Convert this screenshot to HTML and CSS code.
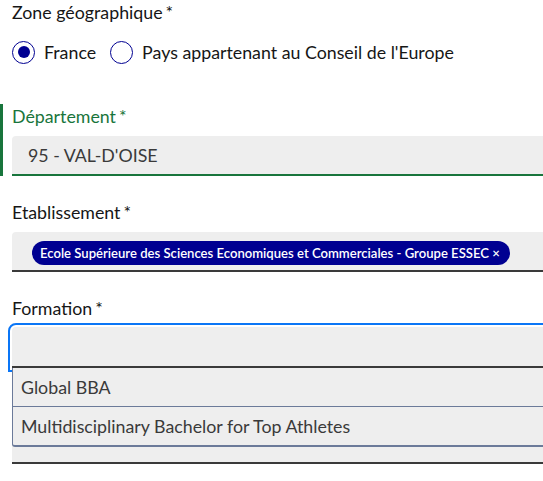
FILE: index.html
```html
<!DOCTYPE html>
<html lang="fr">
<head>
<meta charset="utf-8">
<link rel="stylesheet" href="styles.css">
</head>
<body>
<div class="page">
 <div class="form">
  <fieldset class="zone">
    <legend class="label">Zone géographique<span class="req">*</span></legend>
    <div class="radios">
      <label class="radio"><span class="dot checked"></span>France</label>
      <label class="radio"><span class="dot"></span>Pays appartenant au Conseil de l'Europe</label>
    </div>
  </fieldset>

  <div class="field valid">
    <div class="label green">Département<span class="req">*</span></div>
    <div class="input valid-input">95 - VAL-D'OISE</div>
  </div>

  <div class="field">
    <div class="label">Etablissement<span class="req">*</span></div>
    <div class="input chips">
      <span class="chip">Ecole Supérieure des Sciences Economiques et Commerciales - Groupe ESSEC ×</span>
    </div>
  </div>

  <div class="field">
    <div class="label">Formation<span class="req">*</span></div>
    <div class="combo">
      <div class="combo-input"></div>
      <ul class="options">
        <li>Global BBA</li>
        <li>Multidisciplinary Bachelor for Top Athletes</li>
      </ul>
    </div>
  </div>
 </div>
</div>
</body>
</html>
```

FILE: styles.css
```css
* { box-sizing: border-box; }
html, body { margin: 0; padding: 0; background: #fff; }
body {
  font-family: Lato, "Noto Sans", sans-serif;
  font-size: 17.8px;
  color: #161616;
}
.page { width: 100%; overflow: hidden; height: 481px; }
.form { padding-left: 12px; margin-right: -30px; }
.zone { border: 0; margin: 0; padding: 0; }
.label {
  display: block;
  padding: 0;
  line-height: 24px;
  height: 24px;
}
.req { margin-left: 3px; }
.green { color: #18753c; }
.radios {
  display: flex;
  gap: 14px;
  margin-top: 16px;
  height: 24px;
  align-items: center;
}
.radio { display: flex; align-items: center; gap: 9px; line-height: 24px; }
.dot {
  width: 23px; height: 23px;
  border: 1.5px solid #000091;
  border-radius: 50%;
  display: flex; align-items: center; justify-content: center;
}
.dot.checked::after {
  content: "";
  width: 12px; height: 12px;
  border-radius: 50%;
  background: #000091;
}
.field { margin-top: 24px; }
.field.valid {
  margin-top: 40px;
  margin-left: -12px;
  padding-left: 9px;
  border-left: 3px solid #18753c;
}
.input {
  margin-top: 8px;
  height: 40px;
  background: #eeeeee;
  border-bottom: 2px solid #3a3a3a;
  border-radius: 4px 4px 0 0;
  color: #3a3a3a;
  padding-left: 16px;
  line-height: 38px;
}
.valid-input { border-bottom-color: #18753c; }
.chips { padding: 8px 0 0 20px; line-height: normal; }
.chip {
  display: inline-block;
  background: #000091;
  color: #fff;
  font-size: 13.1px;
  font-weight: 600;
  height: 24px;
  line-height: 24px;
  padding: 0 10px 0 8px;
  border-radius: 12px;
}
.combo {
  margin-top: 7px;
  background: #eeeeee;
  border-bottom: 2px solid #3a3a3a;
  height: 137px;
  border-radius: 4px 4px 0 0;
}
.combo-input {
  height: 41px;
  border-bottom: 2px solid #3a3a3a;
  border-radius: 4px 4px 0 0;
  outline: 2px solid #0a76f6;
  outline-offset: 2px;
}
.options {
  position: relative;
  z-index: 1;
  background: #eeeeee;
  list-style: none;
  margin: 0;
  padding: 0;
  border-left: 1px solid #6b7a99;
  border-bottom: 2px solid #6b7a99;
  border-radius: 0 0 0 3px;
  color: #3a3a3a;
}
.options li {
  height: 38px;
  line-height: 38px;
  padding-left: 8px;
}
.options li + li { border-top: 1px solid #6b7a99; height: 39px; }
```
